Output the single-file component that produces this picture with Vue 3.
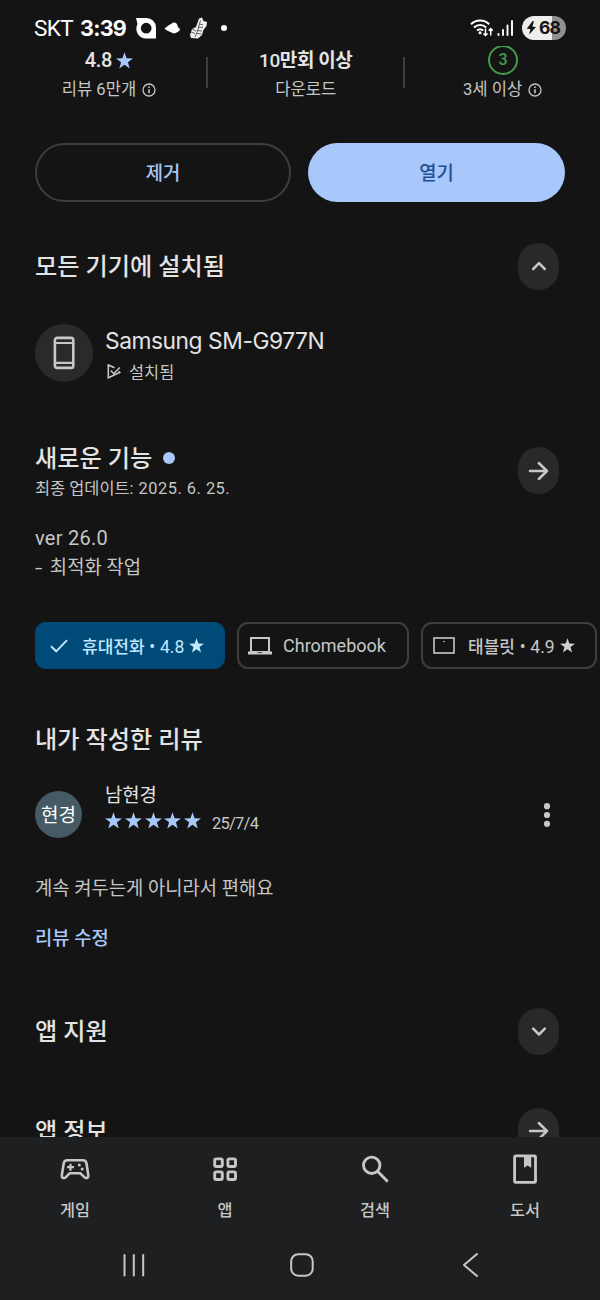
<script setup>
const STAR = 'M12 .2l2.950 8.600 9.050.2-7.200 5.500 2.600 8.800-7.400-5.200-7.400 5.200 2.600-8.800L0 9l9.050-.2z'
const tabs = [
  { id: 'games', label: '게임' },
  { id: 'apps', label: '앱' },
  { id: 'search', label: '검색' },
  { id: 'books', label: '도서' },
]
</script>

<template>
  <div class="screen">
    <header class="status">
      <span class="carrier">SKT</span>
      <span class="clock">3:39</span>
      <svg class="st-app" width="21" height="21" viewBox="0 0 21 21">
        <path fill="#fff" fill-rule="evenodd" d="M0 0h10.500a9.500 9.500 0 0 1 9.500 9.500v11H10A9.800 9.800 0 0 1 1.500 6zM10.200 4.800a5.400 5.400 0 1 0 0 10.800 5.400 5.400 0 0 0 0-10.800z" />
      </svg>
      <svg class="st-cloud" width="17" height="12" viewBox="0 0 17 12">
        <path fill="#fff" d="M.5 6.800C2.500 4.500 7 2 9.500.6c1.500-.3 3 .3 3.700 2.200.4 1.900 1.300 3.200 3 4.400-.6 2.200-3.700 3.800-6.700 4.200C7.400 10.700 3 8.800.5 6.800z" />
      </svg>
      <svg class="st-shoe" width="19" height="22" viewBox="0 0 19 22">
        <path fill="#eee" d="M10 1.500L13 .5l1.500 3.500L18 5l-.5 4-3 4-1.500 5-4 3.500-7-.5-1-3 2-6 4-2z" />
        <path fill="none" stroke="#444" stroke-width=".8" d="M11.500 3.500L8.500 14 6 20M10 7l4 .8M9 10l5 .5M8 13.500l5 .5M7.500 16.500l5 .5M3 12l4 2M2 15l4 1.500" />
      </svg>
      <i class="st-dot"></i>
      <svg class="st-wifi" width="24" height="20" viewBox="0 0 24 20">
        <g fill="none" stroke="#fff" stroke-width="2">
          <path d="M1 6.200a13 13 0 0 1 18.200 0M4 9.500a8.800 8.800 0 0 1 12.200 0M7 12.500a4.800 4.800 0 0 1 6.200 0" />
          <path stroke-width="1.500" d="M15.500 10.500v7M13.500 15.500l2 2 2-2M20.700 17.500v-7M18.700 12.600l2-2 2 2" />
        </g>
        <circle cx="10" cy="14.800" r="1.500" fill="#fff" />
      </svg>
      <svg class="st-signal" width="17" height="18" viewBox="0 0 17 18">
        <path stroke="#fff" stroke-width="1.900" stroke-linecap="round" d="M1.500 15v1M6 11V16M10.500 6.500V16M15 2V16" />
      </svg>
      <span class="battery">
        <svg width="11" height="14" viewBox="0 0 11 14"><path fill="#141414" d="M6.700 0L.7 7.800l3.700.3L3.200 13.500l6.800-7.600-3.700-.5L8 .5z" /></svg>
        <b>68</b>
      </span>
    </header>

    <main class="content">
      <section class="stats">
        <div class="stat">
          <div class="big"><span class="score">4.8</span><svg class="bigstar" width="17" height="17" viewBox="0 0 24 24"><path fill="#a8c7fa" :d="STAR" /></svg></div>
          <div class="small"><span>리뷰 6만개</span><svg width="14" height="14" viewBox="0 0 14 14"><circle cx="7" cy="7" r="6" fill="none" stroke="#c4c7c5" stroke-width="1.300" /><path stroke="#c4c7c5" stroke-width="1.600" d="M7 6.300v4M7 3.500V5" /></svg></div>
        </div>
        <i class="divider"></i>
        <div class="stat">
          <div class="big downloads"><span class="count">10</span>만회 이상</div>
          <div class="small">다운로드</div>
        </div>
        <i class="divider"></i>
        <div class="stat">
          <div class="big"><span class="age">3</span></div>
          <div class="small"><span>3세 이상</span><svg width="14" height="14" viewBox="0 0 14 14"><circle cx="7" cy="7" r="6" fill="none" stroke="#c4c7c5" stroke-width="1.300" /><path stroke="#c4c7c5" stroke-width="1.600" d="M7 6.300v4M7 3.500V5" /></svg></div>
        </div>
      </section>

      <section class="actions">
        <button class="btn outline">제거</button>
        <button class="btn filled">열기</button>
      </section>

      <section class="head installed">
        <h2>모든 기기에 설치됨</h2>
        <span class="pill"><svg class="up" width="16" height="10" viewBox="0 0 16 10"><path class="line" d="M2.200 8L8 2.200l5.800 5.800" /></svg></span>
      </section>

      <section class="device">
        <span class="device-icon">
          <svg width="22" height="34" viewBox="0 0 22 34">
            <rect x="1.900" y="1.900" width="18.400" height="30" rx="2.200" fill="none" stroke="#c7c7c7" stroke-width="2.600" />
            <path stroke="#c7c7c7" stroke-width="2.200" d="M2 7h18M2 26.800h18" />
          </svg>
        </span>
        <div>
          <div class="device-name">Samsung SM-G977N</div>
          <div class="device-state">
            <svg width="14" height="15" viewBox="0 0 14 15"><path fill="none" stroke="#c4c7c5" stroke-width="1.600" d="M7.500 3.700L1.300.9v12.900L12.800 8.500l-1.300-1.200M3.800 6.500l3 3.200 6-6.200" /></svg>
            <span>설치됨</span>
          </div>
        </div>
      </section>

      <section class="head news">
        <div>
          <h2>새로운 기능<i class="new-dot"></i></h2>
          <p class="updated">최종 업데이트: <span class="updated-date">2025. 6. 25.</span></p>
        </div>
        <span class="pill"><svg width="21" height="20" viewBox="0 0 21 20"><path class="line" d="M2 10h17M10.800 2L19 10l-8.200 8" /></svg></span>
      </section>

      <section class="notes">
        <p class="ver">ver 26.0</p>
        <p><span class="dash">-</span> 최적화 작업</p>
      </section>

      <section class="chips">
        <div class="chip selected">
          <svg width="18" height="14" viewBox="0 0 18 14"><path fill="none" stroke="#c2e7ff" stroke-width="1.900" d="M1 7.300l5.200 5L17 1.200" /></svg>
          <span class="chip-text"><b>휴대전화</b> • 4.8</span>
          <svg class="chip-star" width="15" height="15" viewBox="0 0 24 24"><path fill="#c2e7ff" :d="STAR" /></svg>
        </div>
        <div class="chip chromebook">
          <svg width="24" height="18" viewBox="0 0 24 18"><path fill="#c7c7c7" fill-rule="evenodd" d="M2 0h20v14.500h2V17.500H0v-3h2zM4 2v12h16V2zM9.500 15.200v.9h4.500v-.9z" /></svg>
          <span class="chip-text">Chromebook</span>
        </div>
        <div class="chip tablet">
          <svg width="22" height="17" viewBox="0 0 22 17"><rect x="1" y="1" width="20" height="15" fill="none" stroke="#c7c7c7" stroke-width="1.600" /><circle cx="11" cy="4.500" r=".8" fill="#c7c7c7" /></svg>
          <span class="chip-text"><b>태블릿</b> • 4.9</span>
          <svg class="chip-star" width="15" height="15" viewBox="0 0 24 24"><path fill="#d0d0d0" :d="STAR" /></svg>
        </div>
      </section>

      <h2 class="review-title">내가 작성한 리뷰</h2>

      <section class="reviewer">
        <span class="avatar">현경</span>
        <div class="who">
          <div class="name">남현경</div>
          <div class="rating">
            <svg v-for="n in 5" :key="n" width="17" height="17" viewBox="0 0 24 24"><path fill="#a8c7fa" :d="STAR" /></svg>
            <span class="date">25/7/4</span>
          </div>
        </div>
        <svg class="more" width="8" height="26" viewBox="0 0 8 26"><g fill="#c7c7c7"><circle cx="4" cy="4.200" r="3.100" /><circle cx="4" cy="13" r="3.100" /><circle cx="4" cy="21.800" r="3.100" /></g></svg>
      </section>

      <p class="review">계속 켜두는게 아니라서 편해요</p>
      <a class="edit">리뷰 수정</a>

      <section class="head support">
        <h2>앱 지원</h2>
        <span class="pill"><svg width="16" height="10" viewBox="0 0 16 10"><path class="line" d="M2.200 1.700L8 7.500l5.800-5.800" /></svg></span>
      </section>
      <section class="head info">
        <h2>앱 정보</h2>
        <span class="pill"><svg width="21" height="20" viewBox="0 0 21 20"><path class="line" d="M2 10h17M10.800 2L19 10l-8.200 8" /></svg></span>
      </section>
    </main>

    <footer class="bottom">
      <nav class="tabs">
        <div v-for="tab in tabs" :key="tab.id" class="tab">
          <svg width="32" height="32" viewBox="0 0 32 32">
            <g v-if="tab.id === 'games'">
              <path fill="none" stroke="#c7c7c7" stroke-width="2.600" stroke-linejoin="round" d="M8.500 7.300h15.300c2.200 0 3.400 1.100 3.700 3.200l1.800 11.800c.3 2.600-2 3.700-3.700 2.100l-4.300-4.200H10.800l-4.200 4.200c-1.800 1.600-4.100.5-3.800-2.100l1.900-11.800c.3-2.100 1.600-3.200 3.800-3.200z" />
              <path stroke="#c7c7c7" stroke-width="2.200" d="M8 14.200h7M11.500 10.700v7" />
              <circle cx="20.300" cy="12" r="1.500" fill="#c7c7c7" /><circle cx="23.200" cy="16" r="1.500" fill="#c7c7c7" />
            </g>
            <g v-else-if="tab.id === 'apps'" fill="none" stroke="#c7c7c7" stroke-width="2.900">
              <rect x="5.700" y="5.900" width="7.600" height="7.600" rx="1.500" /><rect x="18.900" y="5.900" width="7.600" height="7.600" rx="1.500" />
              <rect x="5.700" y="18.900" width="7.600" height="7.600" rx="1.500" /><rect x="18.900" y="18.900" width="7.600" height="7.600" rx="1.500" />
            </g>
            <g v-else-if="tab.id === 'search'" fill="none" stroke="#c7c7c7" stroke-width="2.900" stroke-linecap="round">
              <circle cx="12.700" cy="12.300" r="8.200" /><path d="M18.700 18.500l9.200 9.200" />
            </g>
            <g v-else>
              <rect x="5.600" y="2.900" width="20.900" height="26.500" rx="1" fill="none" stroke="#c7c7c7" stroke-width="2.800" />
              <path fill="#c7c7c7" d="M15 2.500h7.200v12.200l-3.600-2.200-3.600 2.200z" />
            </g>
          </svg>
          <span>{{ tab.label }}</span>
        </div>
      </nav>
      <div class="system">
        <svg width="24" height="24" viewBox="0 0 24 24"><path stroke="#c7c7c7" stroke-width="2" stroke-linecap="round" d="M2.500 2v20.500M11.800 2v20.500M21.200 2v20.500" /></svg>
        <svg class="home" width="26" height="26" viewBox="0 0 26 26"><rect x="2.200" y="2.200" width="21.500" height="21.500" rx="7" fill="none" stroke="#c7c7c7" stroke-width="2" /></svg>
        <svg width="18" height="26" viewBox="0 0 18 26"><path fill="none" stroke="#c7c7c7" stroke-width="2" stroke-linecap="round" stroke-linejoin="round" d="M16 2L3 13l13 11" /></svg>
      </div>
    </footer>
  </div>
</template>

<style>
body { margin: 0; background: #141414; }
</style>

<style scoped>
.screen { width: 600px; height: 1300px; display: flex; flex-direction: column; background: #141414; color: #e3e3e3; overflow: hidden; font-family: Roboto, "Noto Sans CJK KR", sans-serif; box-sizing: border-box; }
.screen * { box-sizing: border-box; }
svg { display: block; flex: none; }
h2, p { margin: 0; font-weight: 500; white-space: nowrap; }
.status { height: 46px; flex: none; display: flex; align-items: center; padding: 10px 34px 0 34px; color: #fff; }
.carrier { width: 46px; font-size: 22.5px; letter-spacing: -0.6px; white-space: nowrap; }
.clock { width: 56px; font: 700 21.5px/26px Inter, sans-serif; letter-spacing: -0.7px; }
.st-cloud { margin-left: 7px; }
.st-shoe { margin-left: 8px; }
.st-dot { width: 6px; height: 6px; border-radius: 3px; background: #fff; margin-left: 13px; }
.st-wifi { margin-left: auto; }
.st-signal { margin-left: 3px; }
.battery { width: 44px; height: 24px; margin-left: 8px; border-radius: 12px; background: linear-gradient(90deg, #ededed 68%, #909090 68%); display: flex; align-items: center; padding-left: 4px; color: #141414; }
.battery b { font: 700 17.5px/24px Inter, sans-serif; letter-spacing: -0.8px; margin-left: 2px; }
.content { height: 1091px; flex: none; overflow: hidden; padding: 0 35px; display: flex; flex-direction: column; }
.content > * { flex: none; }
.stats { height: 57px; display: flex; margin: 0 -35px 0 -23.5px; }
.stat { flex: 1; display: flex; flex-direction: column; align-items: center; white-space: nowrap; }
.divider { width: 2px; height: 31px; margin-top: 11px; background: #3c3f3e; }
.big { height: 28px; display: flex; align-items: center; font-size: 19px; font-weight: 500; line-height: 28px; }
.score { font-size: 20px; letter-spacing: -0.3px; }
.bigstar { margin: 1px 0 0 4px; }
.downloads { letter-spacing: -0.4px; font-weight: 700; white-space: pre; padding-top: 1px; }
.count { font-weight: 500; }
.age { width: 30px; height: 30px; margin: -1px 0 0 1px; border: 2.3px solid #429c4b; border-radius: 50%; color: #429c4b; font-size: 16px; line-height: 26px; text-align: center; }
.small { height: 28px; display: flex; align-items: center; gap: 6px; color: #c4c7c5; font-size: 16.6px; line-height: 28px; margin-top: 1.5px; }
.actions { height: 59px; margin-top: 40px; display: flex; gap: 17px; }
.btn { height: 59px; padding: 2px 0 0; border-radius: 30px; font: 500 18.8px/26px Roboto, "Noto Sans CJK KR", sans-serif; flex: none; }
.outline { width: 256px; background: transparent; border: 2px solid #3c3f3e; color: #a8c7fa; }
.filled { width: 257px; background: #a8c7fa; border: 0; color: #244f93; }
.head { display: flex; justify-content: space-between; padding-right: 6px; }
h2 { font-size: 24.2px; line-height: 34px; height: 34px; }
.pill { width: 41px; height: 47px; border-radius: 20.5px; background: #28292a; display: flex; align-items: center; justify-content: center; flex: none; }
.line { fill: none; stroke: #c7c7c7; stroke-width: 2.5; stroke-linecap: round; stroke-linejoin: round; }
.installed { height: 47px; margin-top: 41px; align-items: center; }
.device { height: 58px; margin-top: 34px; display: flex; gap: 12px; }
.device-icon { width: 58px; height: 58px; border-radius: 50%; background: #2a2a2a; display: flex; align-items: center; justify-content: center; }
.device-name { font-family: Inter, sans-serif; font-size: 22.8px; line-height: 33px; height: 32px; letter-spacing: -0.46px; white-space: nowrap; }
.device-state { height: 30px; margin-left: 2px; display: flex; align-items: center; gap: 8px; font-size: 16.4px; color: #c4c7c5; }
.news { height: 59px; margin-top: 60px; align-items: flex-start; }
.news h2 { line-height: 35px; }
.news .pill { margin-top: 5px; }
.new-dot { display: inline-block; width: 12px; height: 12px; border-radius: 6px; background: #a8c7fa; margin-left: 11px; vertical-align: 3px; }
.updated { font-size: 16.4px; line-height: 25px; font-weight: 400; color: #c4c7c5; }
.updated-date { letter-spacing: 0.5px; margin-left: 1px; }
.notes { margin-top: 22px; height: 60px; color: #c4c7c5; }
.notes p { font-size: 18.8px; line-height: 30px; font-weight: 400; }
.notes .ver { font-size: 20px; letter-spacing: 0.25px; }
.dash { display: inline-block; transform: scaleX(1.4); transform-origin: left; margin-right: 5px; }
.chips { height: 47px; margin: 39px -32px 0 0; display: flex; gap: 12px; }
.chip { height: 47px; border: 2px solid #3c3f3e; border-radius: 11px; display: flex; align-items: center; flex: none; color: #c7c7c7; white-space: nowrap; font-size: 17.5px; }
.chip b { font-weight: 500; font-size: 17px; }
.chip-text { padding-bottom: 1px; word-spacing: 0.4px; }
.selected { width: 190px; background: #004a77; border-color: #004a77; color: #c2e7ff; padding-left: 13px; }
.selected .chip-text { margin-left: 14px; }
.chip-star { margin-left: 5px; }
.chromebook { width: 172px; padding-left: 9px; }
.chromebook .chip-text { margin-left: 11px; font-size: 18px; }
.tablet { width: 176px; padding-left: 10px; }
.tablet .chip-text { margin-left: 13px; }
.review-title { margin-top: 54px; }
.reviewer { height: 58px; margin-top: 25px; display: flex; }
.avatar { width: 47px; height: 47px; border-radius: 50%; background: #455a64; color: #fff; margin-top: 9px; font-size: 19px; line-height: 49px; text-align: center; flex: none; white-space: nowrap; }
.who { margin-left: 23px; }
.name { font-size: 18.8px; line-height: 29px; height: 26px; }
.rating { height: 26px; display: flex; align-items: center; gap: 2.8px; }
.rating svg { margin-top: -1px; }
.date { font-size: 16.5px; line-height: 26px; margin: 5px 0 0 8px; color: #c4c7c5; letter-spacing: -0.75px; }
.more { margin: 20px 14px 0 auto; }
.review { margin-top: 34px; height: 30px; font-size: 18.8px; line-height: 31px; font-weight: 400; color: #c4c7c5; }
.edit { height: 30px; margin-top: 20px; font-size: 18.8px; line-height: 31px; font-weight: 500; color: #a8c7fa; }
.support { height: 47px; margin-top: 54px; align-items: center; }
.info { height: 47px; margin-top: 52.5px; align-items: center; }
.support h2, .info h2 { margin-top: 1px; }
.installed .up { margin-top: -1px; }
.info .pill svg { margin-top: -1px; }
.bottom { height: 163px; flex: none; background: #1e1f20; }
.tabs { height: 95px; display: flex; padding-top: 16px; }
.tab { flex: 1; display: flex; flex-direction: column; align-items: center; color: #c7c7c7; font-size: 16.3px; font-weight: 500; line-height: 24px; }
.tab span { margin-top: 14px; }
.system { height: 66px; display: flex; justify-content: space-between; align-items: center; padding: 0 121px 0 122px; }
.home { margin-right: 4px; }
</style>
